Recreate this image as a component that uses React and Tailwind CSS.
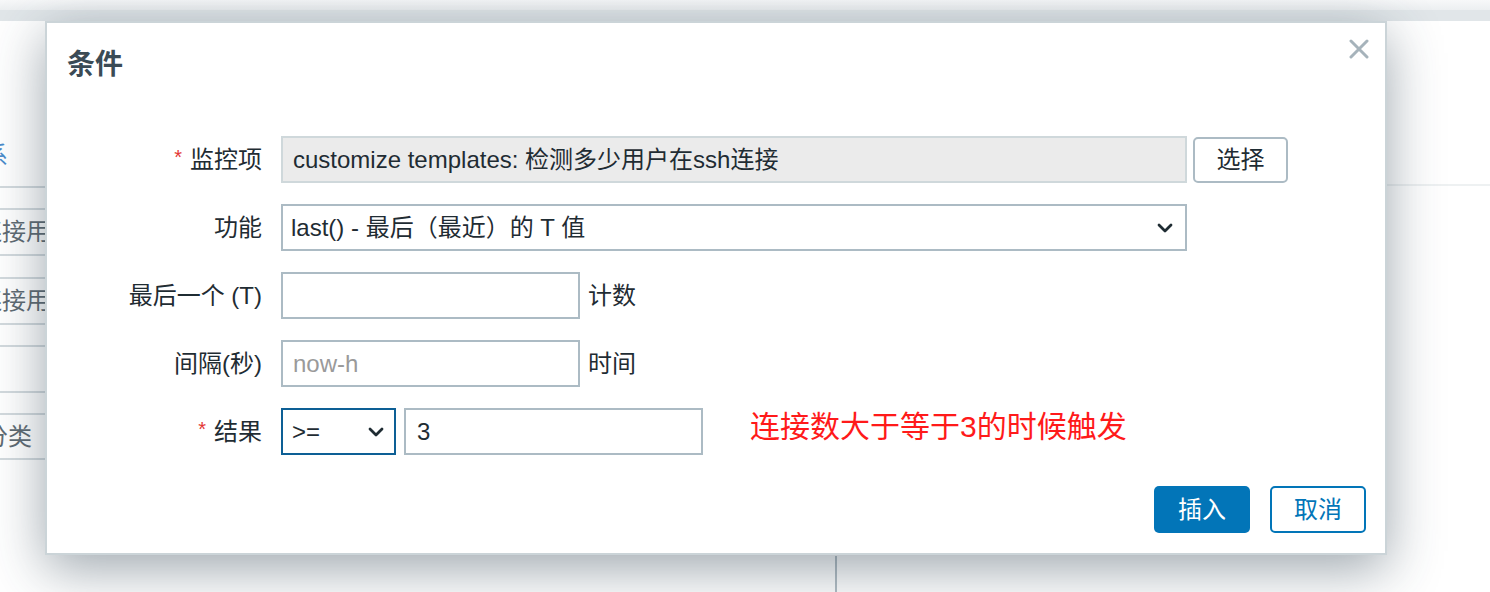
import React from 'react';

const FONT = { fontFamily: '"Liberation Sans", "Noto Sans CJK SC", Arial, sans-serif' };

function Chevron() {
  return (
    <svg width="16" height="10" viewBox="0 0 16 10" className="shrink-0">
      <polyline points="2,2 8,8 14,2" fill="none" stroke="#1f2c33" strokeWidth="2.8" strokeLinecap="round" strokeLinejoin="round" />
    </svg>
  );
}

function Label({ required, children }) {
  return (
    <div className="flex items-center justify-end h-[47px] text-[24px] text-[#1f2c33]">
      {required && <span className="text-[#e33734] text-[20px] mr-[8px] -mt-[6px]">*</span>}
      {children}
    </div>
  );
}

// page behind the dialog
function Backdrop() {
  const rows = [
    { h: 22, text: null },
    { h: 46, text: '连接用', x: '-22px' },
    { h: 23, text: null },
    { h: 46, text: '连接用', x: '-22px' },
    { h: 22, text: null },
    { h: 46, text: null },
    { h: 22, text: null },
    { h: 45, text: '分类', x: '-16px' },
    { h: 22, text: null },
  ];
  return (
    <div className="flex flex-col w-full h-full">
      <div className="h-[10px] bg-gradient-to-b from-[#f7f8f9] to-[#eceff1]" />
      <div className="h-[11px] bg-[#e1e6e9]" />
      <div className="flex flex-1">
        <div className="w-[45px] flex flex-col overflow-hidden bg-white">
          <div className="h-[165px] relative">
            <span className="absolute left-[-40px] top-[121px] text-[24px] text-[#4a8ccb] leading-[28px] whitespace-nowrap">关系</span>
          </div>
          {rows.map((r, i) => (
            <div
              key={i}
              style={{ height: r.h }}
              className="relative border-t-2 border-[#d3dade] flex items-center"
            >
              {r.text && (
                <span className="absolute text-[24px] text-[#5f6b73] whitespace-nowrap leading-[28px]" style={{ left: r.x }}>
                  {r.text}
                </span>
              )}
            </div>
          ))}
        </div>
        <div className="w-[1342px]" />
        <div className="flex-1 flex flex-col bg-white">
          <div className="h-[165px] border-b-2 border-[#eef1f2]" />
        </div>
      </div>
      <div className="absolute left-[835px] top-[556px] w-[2px] h-[40px] bg-[#b3bec5]" />
    </div>
  );
}

export default function App() {
  return (
    <div className="relative w-[1490px] h-[592px] overflow-hidden bg-white" style={FONT}>
      <Backdrop />

      {/* dialog */}
      <div className="absolute left-[45px] top-[21px] w-[1342px] h-[534px] bg-white border-2 border-[#cbd4d8] shadow-[0_14px_50px_rgba(40,60,75,0.45)] flex flex-col">
        <button className="absolute right-[16px] top-[16px] w-[20px] h-[20px] flex items-center justify-center">
          <svg width="20" height="20" viewBox="0 0 20 20">
            <path d="M2 2 L18 18 M18 2 L2 18" stroke="#a6b3bb" strokeWidth="3" strokeLinecap="round" />
          </svg>
        </button>

        <div className="pl-[20px] pt-[22px] h-[113px]">
          <h4 className="text-[28px] leading-[40px] font-bold text-[#3b4b55]">条件</h4>
        </div>

        <div className="grid grid-cols-[215px_1fr] gap-x-[19px] gap-y-[21px]">
          <Label required>监控项</Label>
          <div className="flex items-center gap-[6px]">
            <div className="w-[906px] h-[47px] bg-[#ebebeb] border-2 border-[#cfd8db] flex items-center px-[10px] text-[24px] text-[#1f2c33]">
              customize templates: 检测多少用户在ssh连接
            </div>
            <button className="w-[95px] h-[46px] border-2 border-[#acbbc4] rounded-[5px] bg-white text-[24px] text-[#1f2c33] flex items-center justify-center">
              选择
            </button>
          </div>

          <Label>功能</Label>
          <div className="flex">
            <div className="w-[906px] h-[47px] border-2 border-[#acbbc4] flex items-center justify-between pl-[8px] pr-[12px] text-[24px] text-[#1f2c33]">
              <span>last() - 最后（最近）的 T 值</span>
              <Chevron />
            </div>
          </div>

          <Label>最后一个 (T)</Label>
          <div className="flex items-center gap-[8px]">
            <div className="w-[299px] h-[47px] border-2 border-[#acbbc4]" />
            <span className="text-[24px] text-[#1f2c33]">计数</span>
          </div>

          <Label>间隔(秒)</Label>
          <div className="flex items-center gap-[8px]">
            <div className="w-[299px] h-[47px] border-2 border-[#acbbc4] flex items-center px-[10px] text-[24px] text-[#9a9a9a]">
              now-h
            </div>
            <span className="text-[24px] text-[#1f2c33]">时间</span>
          </div>

          <Label required>结果</Label>
          <div className="flex items-center">
            <div className="w-[115px] h-[47px] border-2 border-[#0d5f95] flex items-center justify-between pl-[9px] pr-[10px] text-[24px] text-[#1f2c33]">
              <span>&gt;=</span>
              <Chevron />
            </div>
            <div className="ml-[8px] w-[299px] h-[47px] border-2 border-[#acbbc4] flex items-center px-[11px] text-[24px] text-[#1f2c33]">
              3
            </div>
            <span className="ml-[47px] -mt-[10px] text-[30px] text-[#ff1a1a]">连接数大于等于3的时候触发</span>
          </div>
        </div>

        <div className="flex justify-end gap-[20px] pr-[19px] mt-[31px]">
          <button className="w-[96px] h-[47px] rounded-[5px] bg-[#0275b8] text-white text-[24px] flex items-center justify-center">
            插入
          </button>
          <button className="w-[96px] h-[47px] rounded-[5px] border-2 border-[#0275b8] bg-white text-[#0275b8] text-[24px] flex items-center justify-center">
            取消
          </button>
        </div>
      </div>
    </div>
  );
}
